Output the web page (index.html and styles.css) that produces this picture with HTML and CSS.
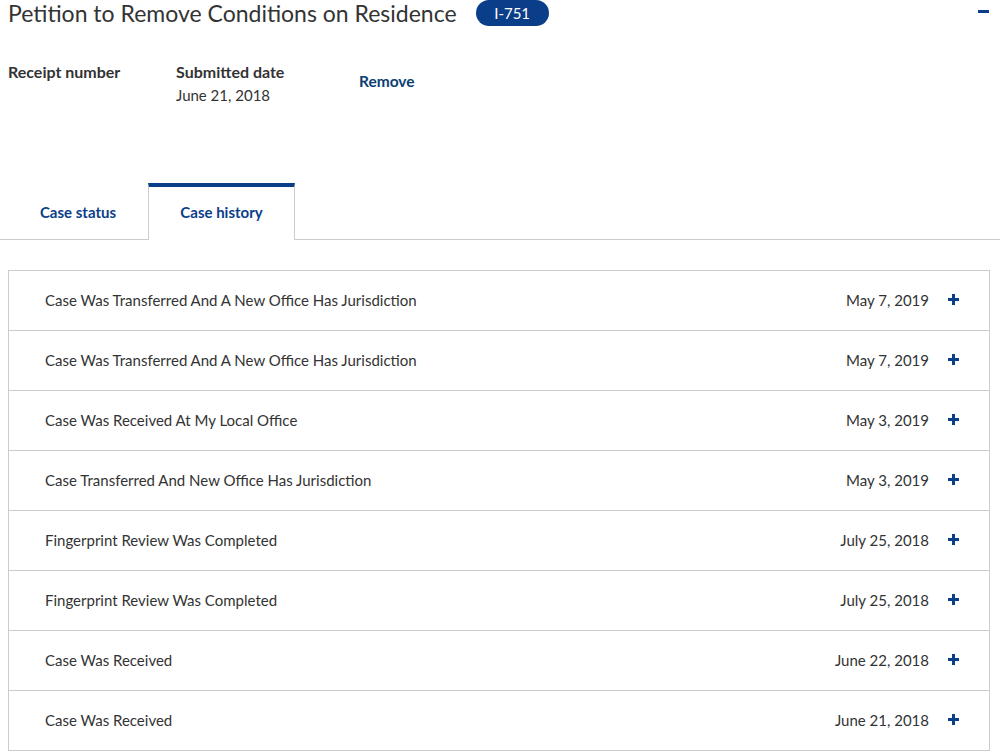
FILE: index.html
```html
<!doctype html>
<html lang="en">
<head>
  <meta charset="UTF-8" />
  <meta name="viewport" content="width=device-width, initial-scale=1" />
  <title>Case history</title>
  <link rel="stylesheet" href="styles.css">
</head>
<body>
  <div class="case-card">
    <div class="case-head">
      <h1 class="case-title">Petition to Remove Conditions on Residence</h1>
      <span class="form-badge">I-751</span>
      <button class="collapse-btn" aria-label="Collapse"><span class="minus"></span></button>
    </div>

    <div class="case-meta">
      <div class="meta-item receipt">
        <div class="meta-label">Receipt number</div>
      </div>
      <div class="meta-item submitted">
        <div class="meta-label">Submitted date</div>
        <div class="meta-value">June 21, 2018</div>
      </div>
      <a class="remove-link" href="#">Remove</a>
    </div>

    <div class="tabs">
      <a class="tab" href="#">Case status</a>
      <a class="tab active" href="#">Case history</a>
    </div>

    <ul class="history">
      <li class="history-row"><span class="event">Case Was Transferred And A New Office Has Jurisdiction</span><span class="date">May 7, 2019</span><span class="plus"></span></li>
      <li class="history-row"><span class="event">Case Was Transferred And A New Office Has Jurisdiction</span><span class="date">May 7, 2019</span><span class="plus"></span></li>
      <li class="history-row"><span class="event">Case Was Received At My Local Office</span><span class="date">May 3, 2019</span><span class="plus"></span></li>
      <li class="history-row"><span class="event">Case Transferred And New Office Has Jurisdiction</span><span class="date">May 3, 2019</span><span class="plus"></span></li>
      <li class="history-row"><span class="event">Fingerprint Review Was Completed</span><span class="date">July 25, 2018</span><span class="plus"></span></li>
      <li class="history-row"><span class="event">Fingerprint Review Was Completed</span><span class="date">July 25, 2018</span><span class="plus"></span></li>
      <li class="history-row"><span class="event">Case Was Received</span><span class="date">June 22, 2018</span><span class="plus"></span></li>
      <li class="history-row"><span class="event">Case Was Received</span><span class="date">June 21, 2018</span><span class="plus"></span></li>
    </ul>
  </div>
</body>
</html>
```

FILE: styles.css
```css
body {
  margin: 0;
  font-family: Lato, "Open Sans", Arial, sans-serif;
  color: #333;
  background: #fff;
}
.case-head {
  display: flex;
  align-items: center;
  height: 26px;
  padding: 0 10px 0 8px;
}
.case-title {
  margin: 0;
  font-size: 23px;
  font-weight: 400;
  color: #333;
  line-height: 26px;
  white-space: nowrap;
}
.form-badge {
  margin-left: 19px;
  background: #0b3e89;
  color: #fff;
  font-size: 15px;
  height: 26px;
  line-height: 26px;
  width: 73px;
  text-align: center;
  border-radius: 13px;
}
.collapse-btn {
  margin-left: auto;
  background: none;
  border: 0;
  padding: 0;
  width: 12px;
  height: 16px;
  align-self: flex-start;
}
.minus {
  display: block;
  width: 11px;
  height: 3px;
  background: #0b3e89;
  margin-top: 6px;
}
.case-meta {
  display: flex;
  padding: 35px 8px 0;
  height: 157px;
  box-sizing: border-box;
}
.receipt {
  width: 168px;
}
.submitted {
  width: 183px;
}
.meta-label {
  font-size: 16px;
  font-weight: 700;
  line-height: 22px;
}
.meta-value {
  font-size: 15px;
  margin-top: 2px;
  line-height: 20px;
}
.remove-link {
  margin-top: 9px;
  font-size: 15.5px;
  font-weight: 700;
  color: #0b3e72;
  text-decoration: none;
  line-height: 22px;
  align-self: flex-start;
}
.tabs {
  display: flex;
  height: 56px;
  border-bottom: 1px solid #ccc;
}
.tab {
  display: flex;
  align-items: center;
  justify-content: center;
  font-size: 15px;
  font-weight: 700;
  color: #0b3e89;
  text-decoration: none;
  box-sizing: border-box;
}
.tab:first-child {
  width: 148px;
  padding-left: 8px;
  padding-top: 2px;
}
.tab.active {
  width: 147px;
  border-top: 4px solid #0b3e89;
  border-left: 1px solid #ccc;
  border-right: 1px solid #ccc;
  background: #fff;
  margin-bottom: -1px;
  padding-bottom: 3px;
}
.history {
  list-style: none;
  margin: 30px 10px 0 8px;
  padding: 0;
  border: 1px solid #ccc;
}
.history-row {
  display: flex;
  align-items: center;
  height: 59px;
  padding: 0 30px 0 36px;
  font-size: 15px;
  color: #333;
}
.history-row + .history-row {
  border-top: 1px solid #ccc;
}
.event {
  flex: 1;
  margin-top: -1px;
}
.date {
  margin-top: -1px;
  margin-right: 19px;
}
.plus {
  position: relative;
  width: 11px;
  height: 11px;
  margin-top: -2px;
}
.plus::before,
.plus::after {
  content: "";
  position: absolute;
  background: #0b3e89;
}
.plus::before {
  left: 0;
  top: 4px;
  width: 11px;
  height: 3px;
}
.plus::after {
  left: 4px;
  top: 0;
  width: 3px;
  height: 11px;
}
```
